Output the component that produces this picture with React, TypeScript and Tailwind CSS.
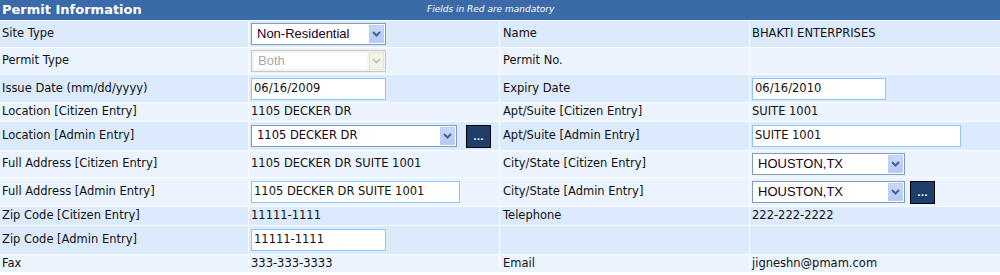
import React from "react";

const font = { fontFamily: '"DejaVu Sans", Verdana, sans-serif' };
const arial = { fontFamily: '"Liberation Sans", Arial, sans-serif' };

function Chevron({ color }: { color: string }) {
  return (
    <svg width="9" height="6" viewBox="0 0 9 6">
      <path d="M1 1 L4.5 4.5 L8 1" fill="none" stroke={color} strokeWidth="2" />
    </svg>
  );
}

function Select({
  text,
  width,
  arialFont,
  disabled,
}: {
  text: string;
  width: string;
  arialFont?: boolean;
  disabled?: boolean;
}) {
  return (
    <div
      className={`${width} h-[22px] flex items-stretch border ${
        disabled ? "border-[#c9c7ba] bg-[#f5f4ea]" : "border-[#7f9db9] bg-white"
      } p-[1px]`}
    >
      <div
        className={`flex-1 flex items-center pl-[4px] ${
          disabled ? "bg-white text-[#a8a8a8] mr-[2px] ml-[1px] my-[1px] pl-[2px]" : "text-[#1a0022]"
        } ${arialFont ? "text-[13px]" : "text-[11.5px]"}`}
        style={arialFont ? arial : font}
      >
        {text}
      </div>
      <div
        className={`w-[15px] flex items-center justify-center border ${
          disabled
            ? "bg-[#f2f1ea] border-[#e6e4d8]"
            : "bg-gradient-to-b from-[#cad9fb] to-[#b4c9f8] border-[#bccdf6]"
        }`}
      >
        <Chevron color={disabled ? "#c9c8c0" : "#4d6185"} />
      </div>
    </div>
  );
}

function Input({ text, width }: { text: string; width: string }) {
  return (
    <div
      className={`${width} h-[22px] border border-[#8fc4f4] bg-white pl-[2px] pt-[1px] text-[11.5px] text-[#111]`}
      style={font}
    >
      {text}
    </div>
  );
}

function DotsButton() {
  return (
    <div className="w-[25px] h-[23px] bg-[#1e3f6c] border border-black flex items-center justify-center">
      <span className="text-white text-[9px] font-bold leading-none mt-[2px]" style={font}>
        ...
      </span>
    </div>
  );
}

type Cell = React.ReactNode;

function Row({ h, dark, cells }: { h: string; dark: boolean; cells: Cell[] }) {
  const bg = dark ? "bg-[#dbeafc]" : "bg-[#eaf3fe]";
  return (
    <div className={`grid grid-cols-[248px_250px_249px_250px] gap-px ${h}`}>
      {cells.map((c, i) => (
        <div
          key={i}
          className={`${bg} flex items-center gap-[9px] text-[11.5px] text-[#111] ${
            i === 2 ? "pl-[3px]" : "pl-[2px]"
          }`}
          style={font}
        >
          {c}
        </div>
      ))}
    </div>
  );
}

export default function App() {
  return (
    <div className="w-[1000px] h-[275px] bg-white" style={font}>
      <div className="flex flex-col gap-px">
        <div className="h-[20px] bg-[#3b6aa9] flex items-center">
          <div className="w-[427px] pl-[2px] text-white font-bold text-[13px]" style={font}>
            Permit Information
          </div>
          <div className="text-white italic text-[9px]" style={font}>
            Fields in Red are mandatory
          </div>
        </div>
        <Row
          h="h-[26px]"
          dark
          cells={[
            "Site Type",
            <Select text="Non-Residential" width="w-[135px]" arialFont />,
            "Name",
            "BHAKTI ENTERPRISES",
          ]}
        />
        <Row
          h="h-[26px]"
          dark={false}
          cells={[
            "Permit Type",
            <Select text="Both" width="w-[135px]" arialFont disabled />,
            "Permit No.",
            "",
          ]}
        />
        <Row
          h="h-[27px]"
          dark
          cells={[
            "Issue Date (mm/dd/yyyy)",
            <Input text="06/16/2009" width="w-[135px]" />,
            "Expiry Date",
            <Input text="06/16/2010" width="w-[134px]" />,
          ]}
        />
        <Row
          h="h-[18px]"
          dark={false}
          cells={["Location [Citizen Entry]", "1105 DECKER DR", "Apt/Suite [Citizen Entry]", "SUITE 1001"]}
        />
        <Row
          h="h-[28px]"
          dark
          cells={[
            "Location [Admin Entry]",
            <>
              <Select text="1105 DECKER DR" width="w-[206px]" />
              <DotsButton />
            </>,
            "Apt/Suite [Admin Entry]",
            <Input text="SUITE 1001" width="w-[209px]" />,
          ]}
        />
        <Row
          h="h-[26px]"
          dark={false}
          cells={[
            "Full Address [Citizen Entry]",
            "1105 DECKER DR SUITE 1001",
            "City/State [Citizen Entry]",
            <Select text="HOUSTON,TX" width="w-[153px]" arialFont />,
          ]}
        />
        <Row
          h="h-[28px]"
          dark={false}
          cells={[
            "Full Address [Admin Entry]",
            <Input text="1105 DECKER DR SUITE 1001" width="w-[209px]" />,
            "City/State [Admin Entry]",
            <>
              <Select text="HOUSTON,TX" width="w-[153px]" arialFont />
              <div className="-ml-[4px]">
                <DotsButton />
              </div>
            </>,
          ]}
        />
        <Row
          h="h-[18px]"
          dark
          cells={["Zip Code [Citizen Entry]", "11111-1111", "Telephone", "222-222-2222"]}
        />
        <Row
          h="h-[28px]"
          dark
          cells={["Zip Code [Admin Entry]", <Input text="11111-1111" width="w-[135px]" />, "", ""]}
        />
        <Row
          h="h-[17px]"
          dark={false}
          cells={["Fax", "333-333-3333", "Email", "jigneshn@pmam.com"]}
        />
      </div>
    </div>
  );
}
